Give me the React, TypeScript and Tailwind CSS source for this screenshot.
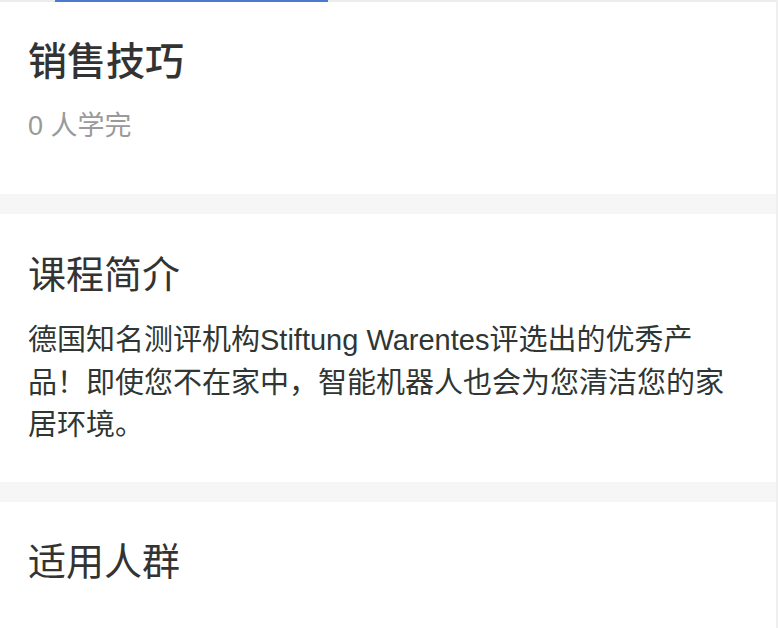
const FONT = "font-['Liberation_Sans','Noto_Sans_CJK_SC',sans-serif]";

function Band() {
  return <div className="h-[20px] bg-[#f6f6f6]" />;
}

export default function App() {
  return (
    <div
      className={`${FONT} h-[628px] w-[778px] overflow-hidden border-r-2 border-[#efefef] bg-white`}
    >
      {/* course header */}
      <section className="h-[194px]">
        <div className="relative h-[2px] bg-[#ececec]">
          <div className="absolute left-[55px] top-0 h-[2px] w-[273px] bg-[#4a7bd0]" />
        </div>
        <div className="px-[28px] pt-[40px]">
          <h1 className="text-[39px] font-medium leading-[40px] text-[#333]">
            销售技巧
          </h1>
          <p className="mt-[31px] text-[27px] leading-[27px] text-[#9a9a9a]">
            0 人学完
          </p>
        </div>
      </section>

      <Band />

      {/* intro */}
      <section className="h-[268px] px-[28px] pt-[42px]">
        <h2 className="text-[38px] font-normal leading-[38px] text-[#333]">
          课程简介
        </h2>
        <p className="mt-[25px] w-[710px] text-[29px] leading-[42.5px] text-[#2f3633]">
          德国知名测评机构Stiftung Warentes评选出的优秀产品！即使您不在家中，智能机器人也会为您清洁您的家居环境。
        </p>
      </section>

      <Band />

      {/* audience */}
      <section className="px-[28px] pt-[41px]">
        <h2 className="text-[38px] font-normal leading-[38px] text-[#333]">
          适用人群
        </h2>
      </section>
    </div>
  );
}
